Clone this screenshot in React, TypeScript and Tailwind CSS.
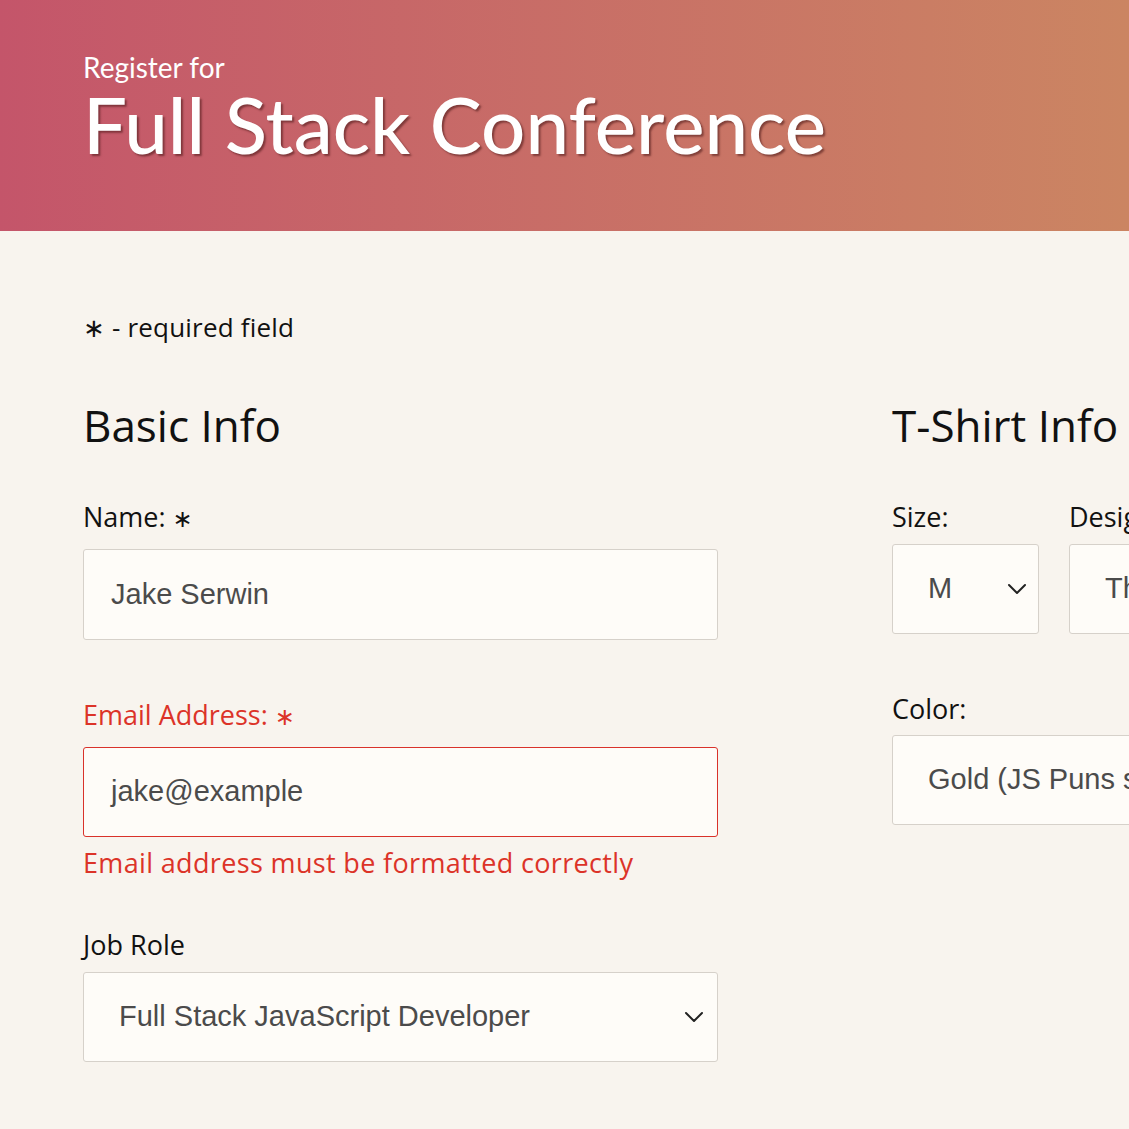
import { ChevronDown } from "lucide-react";

const body = "font-['Open_Sans','Noto_Sans',sans-serif]";
const title = "font-['Lato','Noto_Sans',sans-serif]";
const field = "font-['Liberation_Sans',Arial,sans-serif]";

function Select({ value, className }: { value: string; className?: string }) {
  return (
    <div
      className={`flex items-center justify-between bg-[#fefcf8] border border-[#d6d1ca] rounded-[3px] h-[90px] ${className ?? ""}`}
    >
      <span className={`${field} text-[29px] text-[#4b4b4b] whitespace-nowrap`}>{value}</span>
      <ChevronDown className="w-[32px] h-[32px] text-[#222] shrink-0" strokeWidth={1.5} />
    </div>
  );
}

export default function App() {
  return (
    <div className={`min-h-[1129px] bg-[#f8f4ee] ${body} text-[#111] overflow-hidden`}>
      {/* Header */}
      <header className={`h-[231px] bg-gradient-to-r from-[#c4556a] to-[#cb8562] px-[83px] pt-[49px] ${title}`}>
        <p className="text-[28px] leading-[36px] text-white">Register for</p>
        <h1 className="text-[78px] leading-[78px] text-white font-medium [text-shadow:2px_2px_2px_rgba(70,20,20,0.55)] whitespace-nowrap">
          Full Stack Conference
        </h1>
      </header>

      <main className="px-[83px] pt-[78px]">
        <p className="text-[26px] leading-[36px] tracking-[0.2px]">
          <span className="font-['DejaVu_Sans',sans-serif]">∗</span> - required field
        </p>

        <div className="flex mt-[51px]">
          {/* Basic Info */}
          <section className="w-[635px] shrink-0">
            <h2 className="text-[44px] leading-[56px] font-medium">Basic Info</h2>

            <label className="block mt-[46px] text-[27px] leading-[36px]">
              Name: <span className="font-['DejaVu_Sans',sans-serif] text-[24px]">∗</span>
            </label>
            <div className="mt-[12px] flex items-center bg-[#fefcf8] border border-[#d6d1ca] rounded-[3px] h-[91px] px-[27px]">
              <span className={`${field} text-[29px] text-[#4b4b4b]`}>Jake Serwin</span>
            </div>

            <label className="block mt-[57px] text-[27px] leading-[36px] text-[#dc3328]">
              Email Address: <span className="font-['DejaVu_Sans',sans-serif] text-[24px]">∗</span>
            </label>
            <div className="mt-[12px] flex items-center bg-[#fefcf8] border border-[#d9322a] rounded-[3px] h-[90px] px-[27px]">
              <span className={`${field} text-[29px] text-[#4b4b4b]`}>jake@example</span>
            </div>
            <p className="mt-[8px] text-[27px] leading-[36px] tracking-[0.35px] text-[#dc3328]">
              Email address must be formatted correctly
            </p>

            <label className="block mt-[46px] text-[27px] leading-[36px]">Job Role</label>
            <Select value="Full Stack JavaScript Developer" className="mt-[9px] pl-[35px] pr-[7px]" />
          </section>

          {/* T-Shirt Info */}
          <section className="ml-[174px] shrink-0">
            <h2 className="text-[44px] leading-[56px] font-medium whitespace-nowrap">T-Shirt Info</h2>

            <div className="flex gap-[30px] mt-[46px]">
              <div>
                <label className="block text-[27px] leading-[36px]">Size:</label>
                <Select value="M" className="mt-[9px] w-[147px] pl-[35px] pr-[5px]" />
              </div>
              <div>
                <label className="block text-[27px] leading-[36px]">Design:</label>
                <Select value="Theme - JS Puns" className="mt-[9px] w-[300px] pl-[35px] pr-[7px]" />
              </div>
            </div>

            <label className="block mt-[57px] text-[27px] leading-[36px]">Color:</label>
            <Select value="Gold (JS Puns shirt only)" className="mt-[8px] w-[480px] pl-[35px] pr-[7px]" />
          </section>
        </div>
      </main>
    </div>
  );
}
